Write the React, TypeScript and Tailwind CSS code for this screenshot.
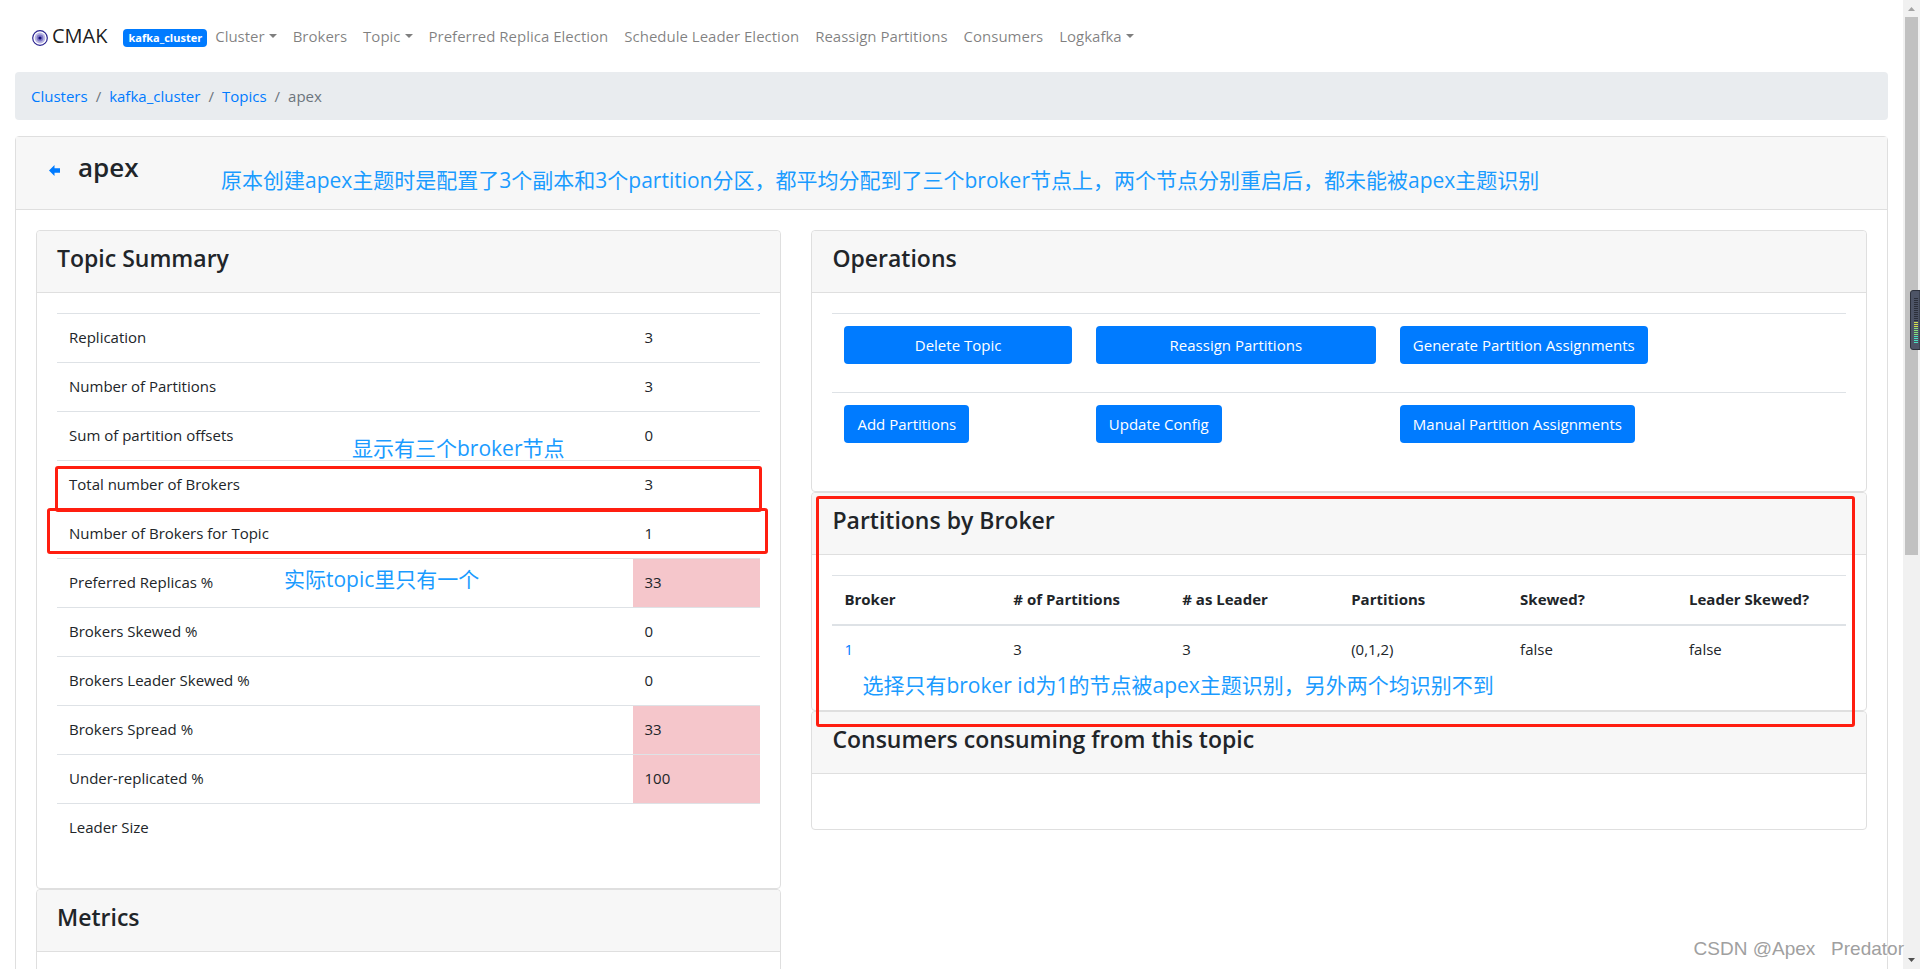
import type { ReactNode } from "react";

const navItems = [
  { label: "Cluster", dropdown: true },
  { label: "Brokers" },
  { label: "Topic", dropdown: true },
  { label: "Preferred Replica Election" },
  { label: "Schedule Leader Election" },
  { label: "Reassign Partitions" },
  { label: "Consumers" },
  { label: "Logkafka", dropdown: true },
];

const summary = [
  { label: "Replication", value: "3" },
  { label: "Number of Partitions", value: "3" },
  { label: "Sum of partition offsets", value: "0" },
  { label: "Total number of Brokers", value: "3" },
  { label: "Number of Brokers for Topic", value: "1" },
  { label: "Preferred Replicas %", value: "33", danger: true },
  { label: "Brokers Skewed %", value: "0" },
  { label: "Brokers Leader Skewed %", value: "0" },
  { label: "Brokers Spread %", value: "33", danger: true },
  { label: "Under-replicated %", value: "100", danger: true },
  { label: "Leader Size", value: "" },
];

const brokerColumns = ["Broker", "# of Partitions", "# as Leader", "Partitions", "Skewed?", "Leader Skewed?"];

const cell = "px-3 pt-[11px] pb-[13px]";

function Logo() {
  return (
    <svg viewBox="0 0 16 16" className="mt-1 size-4" aria-hidden="true">
      <circle cx="8" cy="8" r="7.3" fill="#fff" stroke="#2a2390" strokeWidth="1.2" />
      <circle cx="8" cy="8" r="5.4" fill="#b9b6e2" />
      <circle cx="8" cy="8" r="3.4" fill="#8079c8" />
      <circle cx="8" cy="8" r="1.6" fill="#150c78" />
    </svg>
  );
}

function Card({ title, children }: { title: string; children?: ReactNode }) {
  return (
    <section className="relative rounded border border-[#dfdfdf] bg-white">
      <header className="h-[62px] rounded-t border-b border-[#dfdfdf] bg-[#f7f7f7] px-5 py-3">
        <h2 className="text-[23px] leading-[30px] font-[550]">{title}</h2>
      </header>
      <div className="p-5">{children}</div>
    </section>
  );
}

function Note({ className, children }: { className: string; children: ReactNode }) {
  return (
    <p
      className={`absolute z-10 font-['Open_Sans','Noto_Sans_CJK_SC',sans-serif] text-[21px] leading-7 whitespace-nowrap text-[#1a9bff] ${className}`}
    >
      {children}
    </p>
  );
}

function Frame({ className }: { className: string }) {
  return <div className={`pointer-events-none absolute z-10 rounded-[3px] border-3 border-[#ff1e10] ${className}`} />;
}

function ActionButton({ wide, children }: { wide?: boolean; children: ReactNode }) {
  return (
    <button
      type="button"
      className={`mb-4 block h-[38px] rounded bg-[#007bff] px-[13px] whitespace-nowrap text-white hover:bg-[#0069d9] ${wide ? "w-full" : ""}`}
    >
      {children}
    </button>
  );
}

function Navbar() {
  return (
    <nav className="flex h-[72px] items-center px-8">
      <a href="#" className="flex items-center gap-1 text-xl leading-6 text-black/90">
        <Logo />
        CMAK
      </a>
      <span className="mt-1 mr-2 ml-4 rounded bg-[#007bff] px-[5px] text-[11px] leading-[18px] font-bold text-white">
        kafka_cluster
      </span>
      <ul className="flex gap-4">
        {navItems.map((item) => (
          <li key={item.label}>
            <a href="#" className="flex items-center gap-1 text-black/50">
              {item.label}
              {item.dropdown && (
                <svg viewBox="0 0 8 4" className="h-1 w-2" fill="currentColor" aria-hidden="true">
                  <path d="M0 0h8L4 4z" />
                </svg>
              )}
            </a>
          </li>
        ))}
      </ul>
    </nav>
  );
}

function Breadcrumb() {
  return (
    <ol className="flex h-12 items-center gap-2 rounded bg-[#e9ecef] px-4 text-[#6c757d]">
      {["Clusters", "kafka_cluster", "Topics"].map((name) => (
        <li key={name} className="flex gap-2">
          <a href="#" className="text-[#007bff]">{name}</a>
          <span>/</span>
        </li>
      ))}
      <li>apex</li>
    </ol>
  );
}

function TopicSummary() {
  return (
    <Card title="Topic Summary">
      <table className="mb-4 w-full table-fixed">
        <tbody>
          {summary.map((row) => (
            <tr key={row.label} className="border-t border-[#dee2e6]">
              <td className={`w-9/11 ${cell}`}>{row.label}</td>
              <td className={`${cell} ${row.danger ? "bg-[#f5c6cb]" : ""}`}>{row.value}</td>
            </tr>
          ))}
        </tbody>
      </table>
      <Frame className="top-[235px] right-[18px] left-[18px] h-[46px]" />
      <Frame className="top-[277px] right-3 left-[10px] h-[46px]" />
      <Note className="top-[203px] left-[315px]">显示有三个broker节点</Note>
      <Note className="top-[334px] left-[247px]">实际topic里只有一个</Note>
    </Card>
  );
}

function Operations() {
  return (
    <Card title="Operations">
      <table className="w-full table-fixed">
        <tbody>
          <tr className="border-t border-[#dee2e6]">
            <td className="w-[24.8%] p-3"><ActionButton wide>Delete Topic</ActionButton></td>
            <td className="w-[30%] p-3"><ActionButton wide>Reassign Partitions</ActionButton></td>
            <td className="p-3"><ActionButton>Generate Partition Assignments</ActionButton></td>
          </tr>
          <tr className="border-t border-[#dee2e6]">
            <td className="p-3"><ActionButton>Add Partitions</ActionButton></td>
            <td className="p-3"><ActionButton>Update Config</ActionButton></td>
            <td className="p-3"><ActionButton>Manual Partition Assignments</ActionButton></td>
          </tr>
        </tbody>
      </table>
    </Card>
  );
}

function PartitionsByBroker() {
  return (
    <Card title="Partitions by Broker">
      <table className="mb-4 w-full table-fixed text-left">
        <thead>
          <tr className="border-t border-b-2 border-t-[#dee2e6] border-b-[#dee2e6]">
            {brokerColumns.map((name) => (
              <th key={name} className={`font-bold whitespace-nowrap ${cell}`}>{name}</th>
            ))}
          </tr>
        </thead>
        <tbody>
          <tr>
            <td className={cell}><a href="#" className="text-[#007bff]">1</a></td>
            <td className={cell}>3</td>
            <td className={cell}>3</td>
            <td className={cell}>(0,1,2)</td>
            <td className={cell}>false</td>
            <td className={cell}>false</td>
          </tr>
        </tbody>
      </table>
      <Frame className="top-[3px] right-[11px] left-1 h-[231px]" />
      <Note className="top-[178px] left-[50px]">选择只有broker id为1的节点被apex主题识别，另外两个均识别不到</Note>
    </Card>
  );
}

function ScrollTrack() {
  return (
    <div className="relative flex w-[17px] shrink-0 flex-col items-center justify-between bg-[#f1f1f1]">
      <div className="flex w-full flex-1 flex-col items-center">
        <svg viewBox="0 0 17 17" className="size-[17px]" fill="#a3a3a3" aria-hidden="true">
          <path d="M5 11h7L8.500 7z" />
        </svg>
        <div className="h-[56.5%] w-[13px] bg-[#c1c1c1]" />
      </div>
      <svg viewBox="0 0 17 17" className="size-[17px]" fill="#505050" aria-hidden="true">
        <path d="M5 6h7L8.500 10z" />
      </svg>
      {/* volume meter docked at the screen edge */}
      <svg viewBox="0 0 10 60" className="absolute top-[290px] right-0 h-[60px] w-[10px]" aria-hidden="true">
        <path d="M10 .5H3Q.5 .5 .5 3v54q0 2.500 2.500 2.500h7z" fill="#4d5466" stroke="#2c303b" />
        {Array.from({ length: 23 }, (_, i) => (
          <rect
            key={i}
            x="4"
            y={8 + i * 2}
            width="4"
            height="1"
            fill={i < 12 ? "#2b2f3a" : i < 15 ? "#d3e04d" : i < 19 ? "#86e07a" : "#4be0c0"}
          />
        ))}
      </svg>
    </div>
  );
}

export default function App() {
  return (
    <div className="relative flex h-screen overflow-hidden bg-white font-['Open_Sans','Noto_Sans_CJK_SC',sans-serif] text-[15px] leading-6 text-[#212529]">
      <main className="min-w-0 flex-1 px-[15px]">
        <div className="-mx-[15px]">
          <Navbar />
        </div>
        <Breadcrumb />
        <div className="relative mt-4 rounded border border-[#dfdfdf]">
          <header className="flex h-[73px] items-start gap-[18px] border-b border-[#dfdfdf] bg-[#f7f7f7] px-[33px] pt-3">
            <a href="#" aria-label="Back" className="mt-4 text-[#007bff]">
              <svg viewBox="0 0 10 10" className="size-[11px]" fill="currentColor" aria-hidden="true">
                <path d="M5 0v3h5v4H5v3L0 5z" />
              </svg>
            </a>
            <h1 className="text-[26px] leading-9 font-[550]">apex</h1>
          </header>
          <Note className="top-[29px] left-[205px]">
            原本创建apex主题时是配置了3个副本和3个partition分区，都平均分配到了三个broker节点上，两个节点分别重启后，都未能被apex主题识别
          </Note>
          <div className="grid grid-cols-12 items-start gap-[30px] p-5">
            <div className="col-span-5">
              <TopicSummary />
              <Card title="Metrics">
                <div className="h-24" />
              </Card>
            </div>
            <div className="col-span-7">
              <Operations />
              <PartitionsByBroker />
              <Card title="Consumers consuming from this topic">
                <div className="h-[15px]" />
              </Card>
            </div>
          </div>
        </div>
      </main>
      <ScrollTrack />
      <p className="absolute right-4 bottom-1 font-['Liberation_Sans',sans-serif] text-[19px] leading-8 whitespace-pre text-[#a0a0a0] [text-shadow:1px_1px_1px_#ffffff]">
        {"CSDN @Apex   Predator"}
      </p>
    </div>
  );
}
